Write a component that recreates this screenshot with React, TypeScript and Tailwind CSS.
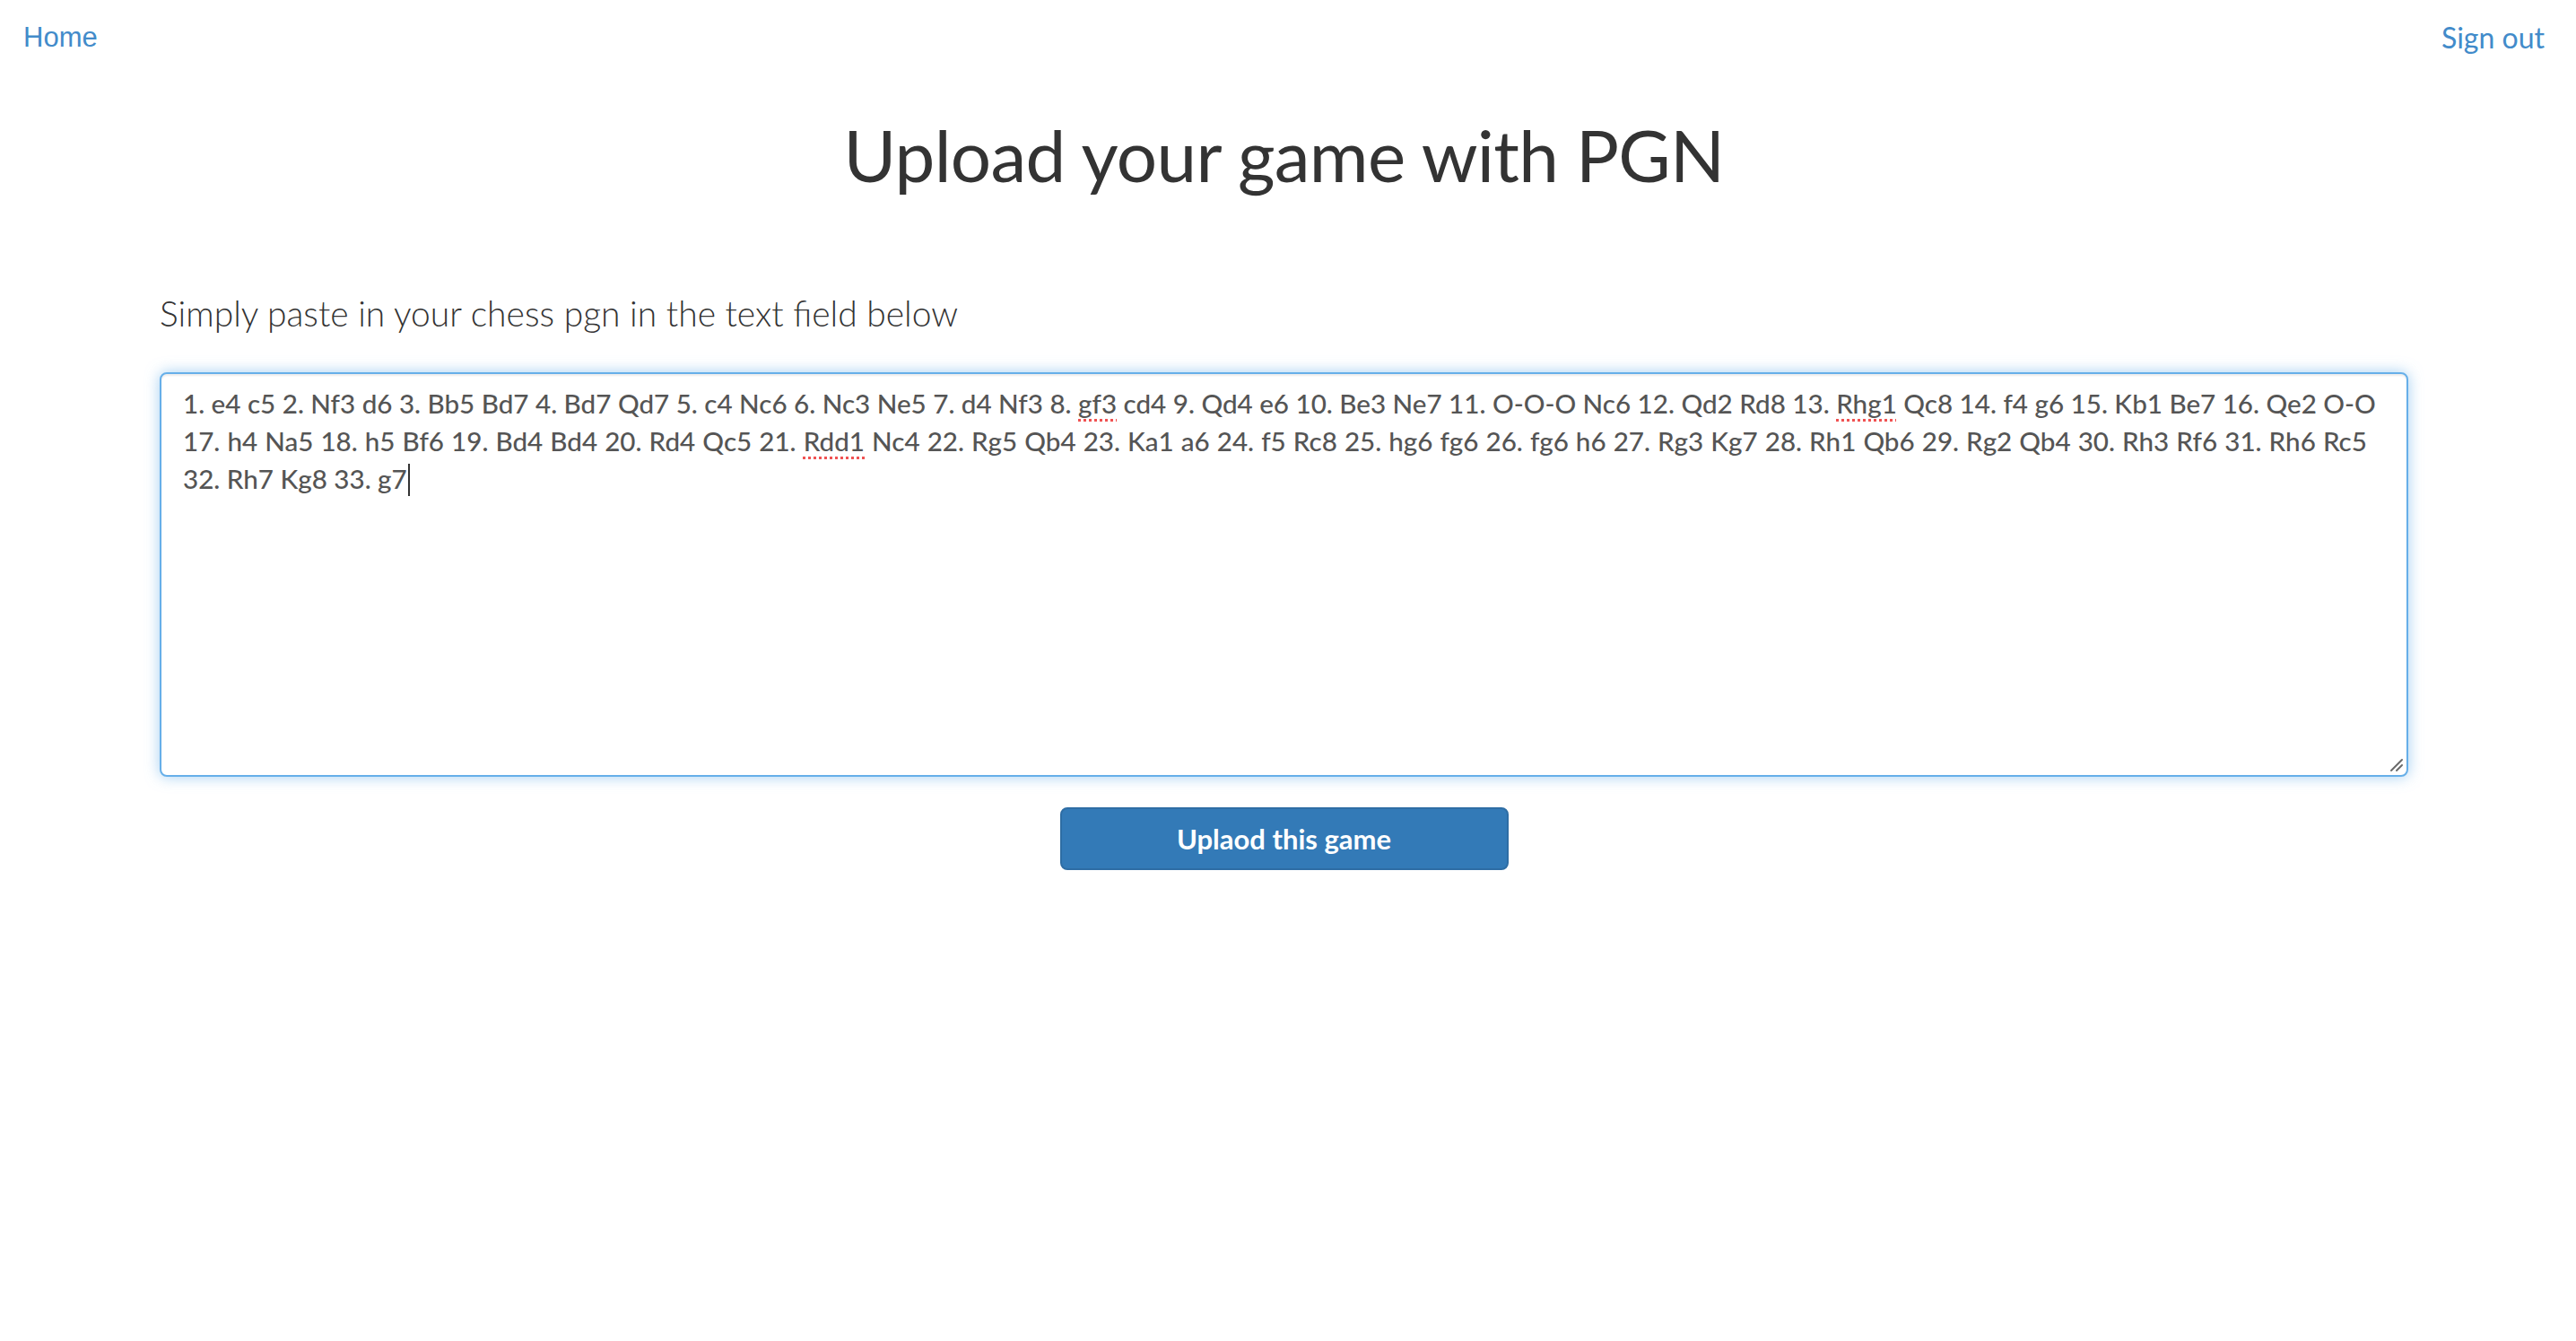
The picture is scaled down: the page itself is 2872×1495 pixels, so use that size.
import React from 'react';

const line1 = [
  '1. e4 c5 2. Nf3 d6 3. Bb5 Bd7 4. Bd7 Qd7 5. c4 Nc6 6. Nc3 Ne5 7. d4 Nf3 8. ',
  { typo: 'gf3' },
  ' cd4 9. Qd4 e6 10. Be3 Ne7 11. O-O-O Nc6 12. Qd2 Rd8 13. ',
  { typo: 'Rhg1' },
  ' Qc8 14. f4 g6 15. Kb1 Be7 16. Qe2 O-O',
];
const line2 = [
  '17. h4 Na5 18. h5 Bf6 19. Bd4 Bd4 20. Rd4 Qc5 21. ',
  { typo: 'Rdd1' },
  ' Nc4 22. Rg5 Qb4 23. Ka1 a6 24. f5 Rc8 25. hg6 fg6 26. fg6 h6 27. Rg3 Kg7 28. Rh1 Qb6 29. Rg2 Qb4 30. Rh3 Rf6 31. Rh6 Rc5',
];

type Part = string | { typo: string };

const Line = ({ parts, spacing }: { parts: Part[]; spacing: string }) => (
  <div className={`whitespace-pre ${spacing}`}>
    {parts.map((p, i) =>
      typeof p === 'string' ? (
        <span key={i}>{p}</span>
      ) : (
        <span key={i} className="underline decoration-dotted decoration-[#f05252] decoration-[3px] underline-offset-[6px]">
          {p.typo}
        </span>
      )
    )}
  </div>
);

const App = () => {
  return (
    <div className="min-h-screen w-[2863px] bg-white font-['Lato','Noto_Sans',sans-serif]">
      <nav className="flex items-center justify-between px-[26px] pt-[20px]">
        <a href="#" className="text-[31px] leading-[44px] text-[#428bca] font-['Liberation_Sans',Arial,sans-serif]">
          Home
        </a>
        <a href="#" className="text-[32px] leading-[44px] text-[#428bca]">
          Sign out
        </a>
      </nav>

      <h1 className="mt-[64px] text-center text-[80px] leading-[1.1] font-normal tracking-[-0.7px] text-[#333]">
        Upload your game with PGN
      </h1>

      <div className="mx-[178px] mt-[107px]">
        <p className="text-[39px] font-light leading-[52px] text-[#333]">
          Simply paste in your chess pgn in the text field below
        </p>

        <div className="relative mt-[40px] h-[451px] rounded-[8px] border-2 border-[#66afe9] bg-white px-[24px] py-[12px] text-[29.6px] font-medium leading-[42px] text-[#555] shadow-[inset_0_2px_2px_rgba(0,0,0,0.075),0_0_16px_rgba(102,175,233,0.6)]">
          <Line parts={line1} spacing="" />
          <Line parts={line2} spacing="[word-spacing:0.6px]" />
          <div className="whitespace-pre">
            32. Rh7 Kg8 33. g7
            <span className="ml-[1px] inline-block h-[36px] w-[2px] bg-[#333] align-[-8px]" />
          </div>
          <svg className="absolute bottom-[3px] right-[3px]" width="16" height="16" viewBox="0 0 16 16">
            <path d="M2 14 L14 2 M8 14 L14 8" stroke="#6b6b6b" strokeWidth="2" strokeLinecap="round" />
          </svg>
        </div>

        <div className="mt-[34px] flex justify-center">
          <button className="h-[70px] w-[500px] rounded-[8px] border-2 border-[#2e6da4] bg-[#337ab7] text-[31px] font-bold text-white">
            Uplaod this game
          </button>
        </div>
      </div>
    </div>
  );
};

export default App;
